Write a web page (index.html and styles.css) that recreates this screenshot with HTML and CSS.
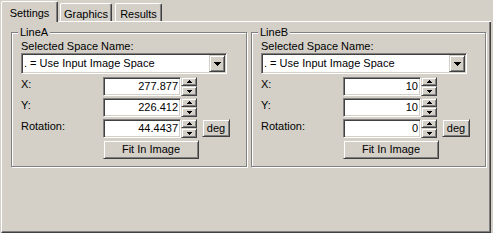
FILE: index.html
```html
<!DOCTYPE html>
<html lang="en">
<head>
  <meta charset="UTF-8" />
  <meta name="viewport" content="width=device-width, initial-scale=1.0"/>
  <title>Line Settings</title>
  <link rel="stylesheet" href="styles.css">
</head>
<body>
  <div class="dialog">
    <div class="tabs">
      <div class="tab active">Settings</div>
      <div class="tab graphics">Graphics</div>
      <div class="tab results">Results</div>
    </div>

    <div class="panel">
      <div class="group group-a">
        <div class="group-title">LineA</div>
        <div class="caption">Selected Space Name:</div>
        <div class="combo">
          <span class="combo-text">. = Use Input Image Space</span>
          <span class="combo-btn">
            <svg width="7" height="4" viewBox="0 0 7 4"><path d="M0 0h7v1h-1v1h-1v1h-1v1h-1v-1h-1v-1h-1v-1h-1z"/></svg>
          </span>
        </div>
        <div class="row first">
          <span class="label">X:</span>
          <span class="field">277.877</span>
          <span class="spin">
            <span class="spin-btn up"><svg width="5" height="3" viewBox="0 0 5 3"><path d="M2 0h1v1h1v1h1v1h-5v-1h1v-1h1z"/></svg></span>
            <span class="spin-btn down"><svg width="5" height="3" viewBox="0 0 5 3"><path d="M0 0h5v1h-1v1h-1v1h-1v-1h-1v-1h-1z"/></svg></span>
          </span>
        </div>
        <div class="row">
          <span class="label">Y:</span>
          <span class="field">226.412</span>
          <span class="spin">
            <span class="spin-btn up"><svg width="5" height="3" viewBox="0 0 5 3"><path d="M2 0h1v1h1v1h1v1h-5v-1h1v-1h1z"/></svg></span>
            <span class="spin-btn down"><svg width="5" height="3" viewBox="0 0 5 3"><path d="M0 0h5v1h-1v1h-1v1h-1v-1h-1v-1h-1z"/></svg></span>
          </span>
        </div>
        <div class="row">
          <span class="label">Rotation:</span>
          <span class="field">44.4437</span>
          <span class="spin">
            <span class="spin-btn up"><svg width="5" height="3" viewBox="0 0 5 3"><path d="M2 0h1v1h1v1h1v1h-5v-1h1v-1h1z"/></svg></span>
            <span class="spin-btn down"><svg width="5" height="3" viewBox="0 0 5 3"><path d="M0 0h5v1h-1v1h-1v1h-1v-1h-1v-1h-1z"/></svg></span>
          </span>
          <button class="btn deg">deg</button>
        </div>
        <button class="btn fit">Fit In Image</button>
      </div>

      <div class="group group-b">
        <div class="group-title">LineB</div>
        <div class="caption">Selected Space Name:</div>
        <div class="combo">
          <span class="combo-text">. = Use Input Image Space</span>
          <span class="combo-btn">
            <svg width="7" height="4" viewBox="0 0 7 4"><path d="M0 0h7v1h-1v1h-1v1h-1v1h-1v-1h-1v-1h-1v-1h-1z"/></svg>
          </span>
        </div>
        <div class="row first">
          <span class="label">X:</span>
          <span class="field">10</span>
          <span class="spin">
            <span class="spin-btn up"><svg width="5" height="3" viewBox="0 0 5 3"><path d="M2 0h1v1h1v1h1v1h-5v-1h1v-1h1z"/></svg></span>
            <span class="spin-btn down"><svg width="5" height="3" viewBox="0 0 5 3"><path d="M0 0h5v1h-1v1h-1v1h-1v-1h-1v-1h-1z"/></svg></span>
          </span>
        </div>
        <div class="row">
          <span class="label">Y:</span>
          <span class="field">10</span>
          <span class="spin">
            <span class="spin-btn up"><svg width="5" height="3" viewBox="0 0 5 3"><path d="M2 0h1v1h1v1h1v1h-5v-1h1v-1h1z"/></svg></span>
            <span class="spin-btn down"><svg width="5" height="3" viewBox="0 0 5 3"><path d="M0 0h5v1h-1v1h-1v1h-1v-1h-1v-1h-1z"/></svg></span>
          </span>
        </div>
        <div class="row">
          <span class="label">Rotation:</span>
          <span class="field">0</span>
          <span class="spin">
            <span class="spin-btn up"><svg width="5" height="3" viewBox="0 0 5 3"><path d="M2 0h1v1h1v1h1v1h-5v-1h1v-1h1z"/></svg></span>
            <span class="spin-btn down"><svg width="5" height="3" viewBox="0 0 5 3"><path d="M0 0h5v1h-1v1h-1v1h-1v-1h-1v-1h-1z"/></svg></span>
          </span>
          <button class="btn deg">deg</button>
        </div>
        <button class="btn fit">Fit In Image</button>
      </div>
    </div>
  </div>
</body>
</html>
```

FILE: styles.css
```css
* {
  box-sizing: border-box;
}

body {
  margin: 0;
  background: #d4d0c8;
  color: #000;
  font-family: "Liberation Sans", Arial, sans-serif;
  font-size: 11px;
  line-height: 13px;
}

svg {
  display: block;
  shape-rendering: crispEdges;
}

.dialog {
  width: 490px;
  margin-left: 1px;
}

/* tab strip */
.tabs {
  display: flex;
  align-items: flex-end;
  height: 22px;
  border-bottom: 1px solid #fff;
}

.tab {
  height: 18px;
  padding-top: 4px;
  text-align: center;
  background: #d4d0c8;
  border: 1px solid;
  border-color: #fff #404040 transparent #fff;
  border-bottom: none;
  border-radius: 2px 2px 0 0;
  box-shadow: inset -1px 0 #808080;
}

.tab.active {
  width: 57px;
  height: 21px;
  margin-bottom: -1px;
  padding-top: 5px;
}

.tab.graphics {
  width: 52px;
  margin-left: 2px;
}

.tab.results {
  width: 47px;
  margin-left: 3px;
}

/* page */
.panel {
  display: flex;
  align-items: flex-start;
  gap: 4px;
  height: 211px;
  padding: 10px 0 0 9px;
  border-left: 1px solid #fff;
  border-right: 1px solid #404040;
  border-bottom: 1px solid #404040;
  box-shadow: inset -1px -1px #808080;
}

.group {
  position: relative;
  height: 135px;
  padding: 7px 0 0 9px;
  border: 1px solid #808080;
  box-shadow: inset 1px 1px #fff, 1px 1px #fff;
}

.group-a {
  width: 236px;
}

.group-b {
  width: 235px;
}

.group-title {
  position: absolute;
  top: -7px;
  left: 6px;
  padding: 0 2px;
  background: #d4d0c8;
}

.caption {
  height: 13px;
}

/* sunken boxes */
.combo,
.field {
  background: #fff;
  border: 1px solid;
  border-color: #808080 #fff #fff #808080;
  box-shadow: inset 1px 1px #404040, inset -1px -1px #d4d0c8;
  padding: 1px;
}

.combo {
  display: flex;
  width: 206px;
  height: 21px;
}

.combo-text {
  flex: 1;
  padding: 2px 0 0 1px;
}

.combo-btn,
.spin-btn,
.btn {
  display: flex;
  align-items: center;
  justify-content: center;
  background: #d4d0c8;
  border: 1px solid;
  border-color: #d4d0c8 #404040 #404040 #d4d0c8;
  box-shadow: inset 1px 1px #fff, inset -1px -1px #808080;
}

.combo-btn {
  width: 16px;
  height: 17px;
}

.row {
  display: flex;
  height: 19px;
  margin-top: 2px;
}

.row.first {
  margin-top: 3px;
}

.label {
  width: 82px;
  padding-top: 1px;
}

.field {
  width: 78px;
  height: 19px;
  padding: 2px 2px 0 1px;
  text-align: right;
}

.spin {
  display: flex;
  flex-direction: column;
  width: 16px;
}

.spin-btn.up {
  height: 9px;
}

.spin-btn.down {
  height: 10px;
}

.btn {
  margin: 0;
  padding: 0;
  font: inherit;
  color: #000;
}

.deg {
  width: 28px;
  height: 18px;
  margin-left: 5px;
}

.fit {
  width: 96px;
  height: 19px;
  margin: 2px 0 0 82px;
}
```
